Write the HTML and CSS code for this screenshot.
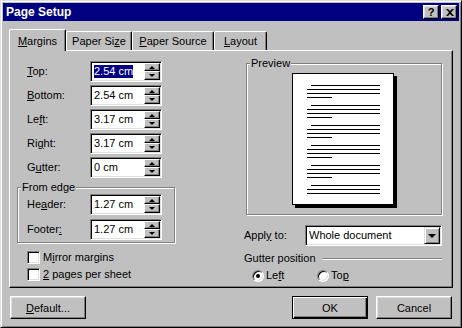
FILE: index.html
```html
<!DOCTYPE html>
<html lang="en">
<head>
  <meta charset="UTF-8">
  <title>Page Setup</title>
  <link rel="stylesheet" href="styles.css">
</head>
<body>
  <div class="window">
    <!-- title bar -->
    <div class="titlebar">
      <span class="title">Page Setup</span>
      <span class="title-btn help">?</span>
      <span class="title-btn close">
        <svg width="8" height="7" viewBox="0 0 8 7"><path d="M0 0h2l2 2 2-2h2L5 3.5 8 7H6L4 5 2 7H0l3-3.5z"/></svg>
      </span>
    </div>

    <!-- tabs -->
    <div class="tabs">
      <div class="tab active tab-margins"><u>M</u>argins</div>
      <div class="tab tab-size">Paper Si<u>z</u>e</div>
      <div class="tab tab-source"><u>P</u>aper Source</div>
      <div class="tab tab-layout"><u>L</u>ayout</div>
    </div>

    <div class="panel">
      <!-- left column: margins -->
      <div class="col-left">
        <div class="field-row">
          <label><u>T</u>op:</label>
          <div class="spin"><span class="value"><span class="sel">2.54 cm</span></span><span class="arrows"><span class="up"></span><span class="down"></span></span></div>
        </div>
        <div class="field-row">
          <label><u>B</u>ottom:</label>
          <div class="spin"><span class="value">2.54 cm</span><span class="arrows"><span class="up"></span><span class="down"></span></span></div>
        </div>
        <div class="field-row">
          <label>Le<u>f</u>t:</label>
          <div class="spin"><span class="value">3.17 cm</span><span class="arrows"><span class="up"></span><span class="down"></span></span></div>
        </div>
        <div class="field-row">
          <label>Ri<u>g</u>ht:</label>
          <div class="spin"><span class="value">3.17 cm</span><span class="arrows"><span class="up"></span><span class="down"></span></span></div>
        </div>
        <div class="field-row">
          <label>G<u>u</u>tter:</label>
          <div class="spin"><span class="value">0 cm</span><span class="arrows"><span class="up"></span><span class="down"></span></span></div>
        </div>

        <fieldset class="group edge-group">
          <legend>From edge</legend>
          <div class="field-row">
            <label>He<u>a</u>der:</label>
            <div class="spin"><span class="value">1.27 cm</span><span class="arrows"><span class="up"></span><span class="down"></span></span></div>
          </div>
          <div class="field-row">
            <label>Footer<u>:</u></label>
            <div class="spin"><span class="value">1.27 cm</span><span class="arrows"><span class="up"></span><span class="down"></span></span></div>
          </div>
        </fieldset>

        <div class="check-row"><span class="checkbox"></span><span>M<u>i</u>rror margins</span></div>
        <div class="check-row"><span class="checkbox"></span><span><u>2</u> pages per sheet</span></div>
      </div>

      <!-- right column: preview -->
      <div class="col-right">
        <fieldset class="group preview-group">
          <legend>Preview</legend>
          <div class="page">
            <div class="para"><div class="ln first"></div><div class="ln"></div><div class="ln"></div><div class="ln short"></div></div>
            <div class="para"><div class="ln first"></div><div class="ln"></div><div class="ln"></div><div class="ln short"></div></div>
            <div class="para"><div class="ln first"></div><div class="ln"></div><div class="ln"></div><div class="ln short"></div></div>
            <div class="para"><div class="ln first"></div><div class="ln"></div><div class="ln"></div><div class="ln short"></div></div>
            <div class="para"><div class="ln first"></div><div class="ln"></div><div class="ln"></div><div class="ln short"></div></div>
            <div class="para"><div class="ln first"></div><div class="ln"></div><div class="ln"></div></div>
          </div>
        </fieldset>

        <div class="apply-row">
          <label>Appl<u>y</u> to:</label>
          <div class="combo"><span class="value">Whole document</span><span class="drop"></span></div>
        </div>

        <div class="gutter-head"><span>Gutter position</span><span class="rule"></span></div>
        <div class="radio-row">
          <span class="radio-item first"><span class="radio checked"></span><span>Le<u>f</u>t</span></span>
          <span class="radio-item"><span class="radio"></span><span>To<u>p</u></span></span>
        </div>
      </div>
    </div>

    <!-- dialog buttons -->
    <div class="buttons">
      <button class="btn"><u>D</u>efault...</button>
      <div class="spacer"></div>
      <button class="btn default">OK</button>
      <button class="btn">Cancel</button>
    </div>
  </div>
</body>
</html>
```

FILE: styles.css
```css
body {
  margin: 0;
  font-family: "Liberation Sans", Arial, sans-serif;
  font-size: 11px;
  line-height: 13px;
  color: #000;
  background: #c0c0c0;
}

u {
  text-decoration: underline;
  text-underline-offset: 1px;
}

.window {
  width: 462px;
  height: 328px;
  box-sizing: border-box;
  background: #c0c0c0;
  border: 1px solid;
  border-color: #dfdfdf #000 #000 #dfdfdf;
  box-shadow: inset 1px 1px #fff, inset -1px -1px #808080;
  padding: 2px;
}

/* title bar */
.titlebar {
  height: 18px;
  background: #000080;
  color: #fff;
  display: flex;
  align-items: center;
  padding: 0 2px 0 3px;
}

.title {
  font-weight: bold;
  font-size: 12px;
  flex: 1;
}

.title-btn {
  width: 16px;
  height: 14px;
  box-sizing: border-box;
  background: #c0c0c0;
  color: #000;
  border: 1px solid;
  border-color: #fff #000 #000 #fff;
  box-shadow: inset -1px -1px #808080, inset 1px 1px #dfdfdf;
  display: flex;
  align-items: center;
  justify-content: center;
}

.title-btn.help {
  margin-right: 2px;
  font-weight: bold;
  font-size: 11px;
}

.title-btn svg {
  display: block;
  margin-left: 1px;
}

/* tabs */
.tabs {
  display: flex;
  align-items: flex-end;
  height: 21px;
  margin: 8px 0 0 6px;
}

.tab {
  height: 19px;
  box-sizing: border-box;
  padding-top: 3px;
  text-align: center;
  border-top: 1px solid #fff;
  border-left: 1px solid #fff;
  border-right: 1px solid #000;
  border-radius: 2px 2px 0 0;
  box-shadow: inset -1px 0 #808080;
  background: #c0c0c0;
}

.tab.active {
  height: 22px;
  margin-bottom: -1px;
  padding-top: 5px;
  position: relative;
  z-index: 1;
}

.tab-margins { width: 57px; }
.tab-size { width: 66px; }
.tab-source { width: 82px; }
.tab-layout { width: 53px; }

/* main panel */
.panel {
  display: flex;
  height: 238px;
  box-sizing: border-box;
  margin: 0 6px;
  padding: 6px 0 0 7px;
  border: 1px solid;
  border-color: #fff #000 #000 #fff;
  box-shadow: inset -1px -1px #808080;
}

.col-left {
  width: 159px;
  padding-top: 4px;
}

.field-row {
  display: flex;
  align-items: center;
  height: 21px;
  margin-bottom: 3px;
}

.field-row label {
  width: 73px;
  padding-left: 10px;
  box-sizing: border-box;
}

.spin {
  width: 72px;
  height: 21px;
  box-sizing: border-box;
  display: flex;
  background: #fff;
  border: 1px solid;
  border-color: #808080 #fff #fff #808080;
  box-shadow: inset 1px 1px #000, inset -1px -1px #dfdfdf;
  padding: 1px;
}

.spin .value {
  flex: 1;
  display: flex;
  align-items: center;
  padding-left: 2px;
}

.sel {
  background: #000080;
  color: #fff;
}

.arrows {
  width: 16px;
  display: flex;
  flex-direction: column;
}

.arrows span {
  box-sizing: border-box;
  background: #c0c0c0;
  border: 1px solid;
  border-color: #fff #000 #000 #fff;
  box-shadow: inset -1px -1px #808080;
  display: flex;
  align-items: center;
  justify-content: center;
}

.arrows .up { height: 8px; }
.arrows .down { height: 9px; }

.arrows .up::before {
  content: "";
  border-left: 3px solid transparent;
  border-right: 3px solid transparent;
  border-bottom: 3px solid #000;
}

.arrows .down::before {
  content: "";
  border-left: 3px solid transparent;
  border-right: 3px solid transparent;
  border-top: 3px solid #000;
}

/* etched group boxes */
.group {
  margin: 0;
  padding: 0;
  box-sizing: border-box;
  border: 1px solid #808080;
  box-shadow: inset 1px 1px #fff, 1px 1px #fff;
  min-width: 0;
}

.group legend {
  padding: 0 1px;
  margin-left: 3px;
  background: #c0c0c0;
}

.edge-group {
  width: 158px;
  padding-bottom: 2px;
}

.edge-group .field-row {
  margin-bottom: 4px;
}

.edge-group .field-row:last-child {
  margin-bottom: 0;
}

.edge-group .field-row label {
  width: 72px;
  padding-left: 9px;
}

.check-row {
  display: flex;
  align-items: center;
  height: 13px;
  padding-left: 10px;
  margin-top: 8px;
}

.check-row + .check-row {
  margin-top: 4px;
}

.checkbox {
  width: 13px;
  height: 13px;
  box-sizing: border-box;
  background: #fff;
  border: 1px solid;
  border-color: #808080 #fff #fff #808080;
  box-shadow: inset 1px 1px #000, inset -1px -1px #dfdfdf;
  margin-right: 3px;
}

/* right column */
.col-right {
  width: 198px;
  margin-left: 68px;
}

.preview-group {
  width: 196px;
  margin-left: 2px;
}

.page {
  width: 102px;
  height: 132px;
  box-sizing: border-box;
  margin: 3px 0 9px 45px;
  padding: 11px 0 0 14px;
  background: #fff;
  border: 1px solid #000;
  box-shadow: 3px 3px 0 #000;
}

.ln {
  width: 73px;
  height: 1px;
  background: #000;
  margin-bottom: 3px;
}

.ln.first {
  width: 69px;
  margin-left: 4px;
}

.ln.short {
  width: 25px;
  margin-bottom: 7px;
}

.apply-row {
  display: flex;
  align-items: center;
  margin-top: 10px;
}

.apply-row label {
  width: 61px;
}

.combo {
  width: 137px;
  height: 21px;
  box-sizing: border-box;
  display: flex;
  background: #fff;
  border: 1px solid;
  border-color: #808080 #fff #fff #808080;
  box-shadow: inset 1px 1px #000, inset -1px -1px #dfdfdf;
  padding: 1px;
}

.combo .value {
  flex: 1;
  display: flex;
  align-items: center;
  padding-left: 2px;
}

.combo .drop {
  width: 16px;
  box-sizing: border-box;
  background: #c0c0c0;
  border: 1px solid;
  border-color: #dfdfdf #000 #000 #dfdfdf;
  box-shadow: inset 1px 1px #fff, inset -1px -1px #808080;
  display: flex;
  align-items: center;
  justify-content: center;
}

.combo .drop::before {
  content: "";
  border-left: 4px solid transparent;
  border-right: 4px solid transparent;
  border-top: 4px solid #000;
}

.gutter-head {
  display: flex;
  align-items: center;
  margin-top: 6px;
}

.gutter-head .rule {
  flex: 1;
  height: 1px;
  margin-left: 7px;
  background: #808080;
  box-shadow: 0 1px #fff;
}

.radio-row {
  display: flex;
  align-items: center;
  height: 13px;
  margin-top: 4px;
  padding-left: 8px;
}

.radio-item {
  display: flex;
  align-items: center;
}

.radio-item.first {
  width: 65px;
}

.radio {
  width: 12px;
  height: 12px;
  box-sizing: border-box;
  border-radius: 50%;
  background: #fff;
  border: 1px solid;
  border-color: #808080 #fff #fff #808080;
  box-shadow: inset 1px 1px #000, inset -1px -1px #dfdfdf;
  display: flex;
  align-items: center;
  justify-content: center;
  margin-right: 2px;
}

.radio.checked::after {
  content: "";
  width: 4px;
  height: 4px;
  border-radius: 50%;
  background: #000;
}

/* bottom buttons */
.buttons {
  display: flex;
  margin: 8px 7px 0 7px;
}

.spacer {
  flex: 1;
}

.btn {
  width: 76px;
  height: 23px;
  box-sizing: border-box;
  padding: 0;
  font-family: inherit;
  font-size: 11px;
  color: #000;
  background: #c0c0c0;
  border: 1px solid;
  border-color: #fff #000 #000 #fff;
  box-shadow: inset -1px -1px #808080, inset 1px 1px #dfdfdf;
  border-radius: 0;
}

.btn + .btn {
  margin-left: 8px;
}

.btn.default {
  border: 1px solid #000;
  box-shadow: inset 1px 1px #fff, inset -1px -1px #000, inset -2px -2px #808080;
}
```
